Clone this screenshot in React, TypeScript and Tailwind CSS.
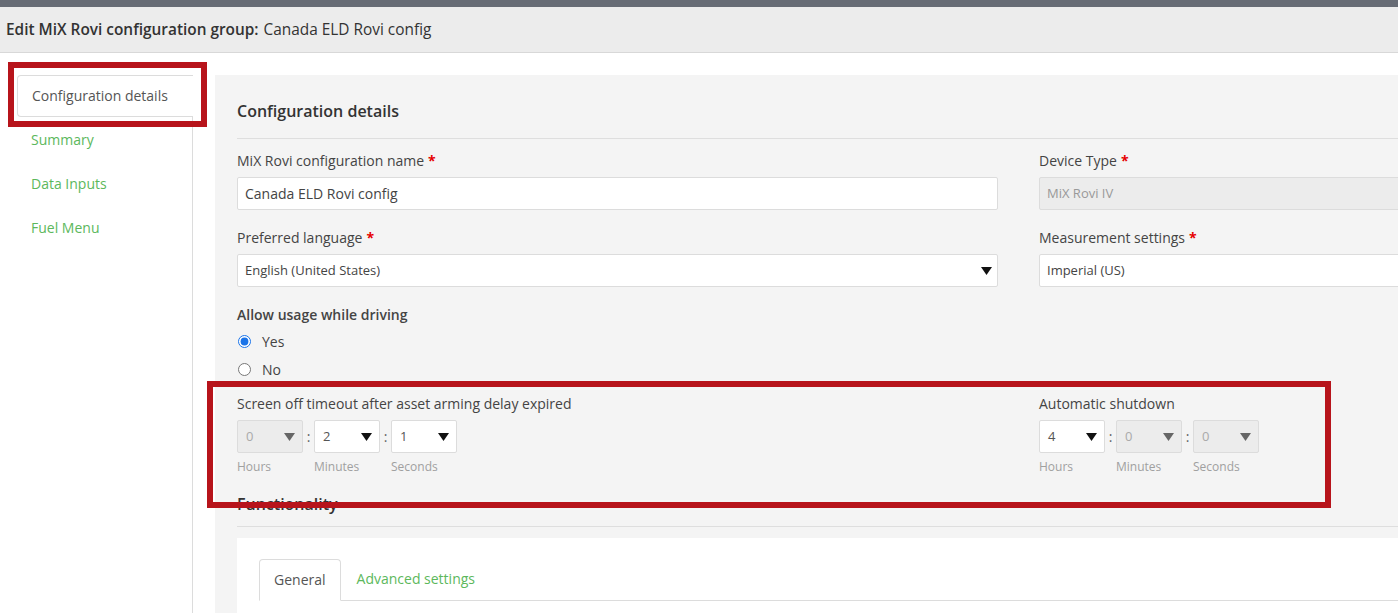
import { FunctionComponent } from "react";

const green = "text-[#5cb85c]";

const Caret: FunctionComponent<{ muted?: boolean }> = ({ muted }) => (
  <svg width="11" height="8" viewBox="0 0 11 8" className="shrink-0">
    <path d="M0 0h11L5.5 8z" fill={muted ? "#666" : "#111"} />
  </svg>
);

type TimeSelectProps = { value: string; unit: string; disabled?: boolean };

const TimeSelect: FunctionComponent<TimeSelectProps> = ({ value, unit, disabled }) => (
  <div className="flex flex-col">
    <div
      className={`flex h-[33px] w-[66px] items-center justify-between rounded-[2px] border border-[#dcdcdc] pl-[8px] pr-[7px] text-[13px] ${
        disabled ? "bg-[#ececec] text-[#aaa]" : "bg-white text-[#555]"
      }`}
    >
      <span>{value}</span>
      <Caret muted={disabled} />
    </div>
    <span className="mt-[6px] text-[12px] leading-[16px] text-[#a0a0a0]">{unit}</span>
  </div>
);

const Colon = () => (
  <span className="flex h-[33px] w-[11px] items-center justify-center text-[14px] text-[#666]">:</span>
);

const TimeGroup: FunctionComponent<{ title: string; values: [string, string, string]; enabled: boolean[] }> = ({
  title,
  values,
  enabled,
}) => (
  <div>
    <p className="h-[20px] text-[14px] leading-[20px] text-[#444]">{title}</p>
    <div className="mt-[6px] flex items-start">
      <TimeSelect value={values[0]} unit="Hours" disabled={!enabled[0]} />
      <Colon />
      <TimeSelect value={values[1]} unit="Minutes" disabled={!enabled[1]} />
      <Colon />
      <TimeSelect value={values[2]} unit="Seconds" disabled={!enabled[2]} />
    </div>
  </div>
);

const Label: FunctionComponent<{ text: string; required?: boolean }> = ({ text, required }) => (
  <p className="h-[20px] text-[14px] leading-[20px] text-[#444]">
    {text}
    {required && <span className="ml-[4px] font-bold text-[#e60000]">*</span>}
  </p>
);

const App = () => {
  return (
    <div
      className="relative h-[613px] w-full overflow-hidden bg-white text-[#333]"
      style={{ fontFamily: '"Open Sans", "Liberation Sans", sans-serif' }}
    >
      <div className="h-[7px] bg-[#676c75]" />
      <div className="flex h-[46px] items-center border-b border-[#d8d8d8] bg-[#ececec] pl-[6px] text-[15.4px] text-[#333]">
        <span className="font-semibold">Edit MiX Rovi configuration group:</span>
        <span className="ml-[5px]">Canada ELD Rovi config</span>
      </div>

      <div className="flex pt-[22px]">
        <nav className="flex w-[193px] shrink-0 flex-col pl-[17px]">
          <div className="flex h-[42px] items-center rounded-l-[4px] border border-r-0 border-[#dcdcdc] pb-[1px] pl-[14px] text-[14px] text-[#555]">
            Configuration details
          </div>
          <div className="flex h-[500px] flex-col border-r border-[#dcdcdc] pl-[14px] text-[14px]">
            <span className={`mt-[13px] h-[20px] leading-[20px] ${green}`}>Summary</span>
            <span className={`mt-[24px] h-[20px] leading-[20px] ${green}`}>Data Inputs</span>
            <span className={`mt-[24px] h-[20px] leading-[20px] ${green}`}>Fuel Menu</span>
          </div>
        </nav>

        <main className="ml-[22px] w-[1620px] shrink-0 bg-[#f4f4f4] px-[22px] pt-[25px]">
          <h2 className="h-[22px] text-[16px] leading-[22px] font-semibold text-[#333]">Configuration details</h2>
          <div className="mt-[16px] border-t border-[#dedede]" />

          <div className="mt-[12px] grid grid-cols-[761px_761px] gap-x-[41px]">
            <div>
              <Label text="MiX Rovi configuration name" required />
              <div className="mt-[6px] flex h-[33px] items-center rounded-[2px] border border-[#dcdcdc] bg-white pl-[7px] text-[14px] text-[#444]">
                Canada ELD Rovi config
              </div>
            </div>
            <div>
              <Label text="Device Type" required />
              <div className="mt-[6px] flex h-[33px] items-center rounded-[2px] border border-[#dcdcdc] bg-[#ececec] pl-[7px] text-[13px] text-[#999]">
                MiX Rovi IV
              </div>
            </div>

            <div className="mt-[18px]">
              <Label text="Preferred language" required />
              <div className="mt-[6px] flex h-[33px] items-center justify-between rounded-[2px] border border-[#dcdcdc] bg-white pl-[7px] pr-[5px] text-[13px] text-[#444]">
                <span>English (United States)</span>
                <Caret />
              </div>
            </div>
            <div className="mt-[18px]">
              <Label text="Measurement settings" required />
              <div className="mt-[6px] flex h-[33px] items-center rounded-[2px] border border-[#dcdcdc] bg-white pl-[7px] text-[13px] text-[#444]">
                Imperial (US)
              </div>
            </div>
          </div>

          <p className="mt-[18px] h-[20px] text-[14px] leading-[20px] font-semibold text-[#444]">Allow usage while driving</p>
          <label className="mt-[6px] flex h-[20px] items-center text-[14px] text-[#444]">
            <input type="radio" name="drive" defaultChecked className="m-0 ml-[1px] h-[13px] w-[13px] accent-[#1a73e8]" />
            <span className="ml-[11px]">Yes</span>
          </label>
          <label className="mt-[8px] flex h-[20px] items-center text-[14px] text-[#444]">
            <input type="radio" name="drive" className="m-0 ml-[1px] h-[13px] w-[13px]" />
            <span className="ml-[11px]">No</span>
          </label>

          <div className="mt-[15px] grid grid-cols-[761px_761px] gap-x-[41px]">
            <TimeGroup
              title="Screen off timeout after asset arming delay expired"
              values={["0", "2", "1"]}
              enabled={[false, true, true]}
            />
            <TimeGroup title="Automatic shutdown" values={["4", "0", "0"]} enabled={[true, false, false]} />
          </div>

          <h2 className="mt-[18px] h-[22px] text-[16px] leading-[22px] font-semibold text-[#333]">Functionality</h2>
          <div className="mt-[11px] border-t border-[#dedede]" />

          <div className="mt-[11px] h-[200px] bg-white px-[22px] pt-[21px]">
            <div className="flex items-end border-b border-[#dcdcdc]">
              <div className="-mb-px flex h-[42px] items-center rounded-t-[4px] border border-b-white border-[#dcdcdc] bg-white px-[14px] pb-[2px] text-[14px] text-[#555]">
                General
              </div>
              <div className={`flex h-[41px] items-center px-[16px] pb-[2px] text-[14px] ${green}`}>Advanced settings</div>
            </div>
          </div>
        </main>
      </div>

      {/* annotation boxes drawn over the screenshot */}
      <div className="pointer-events-none absolute left-[8px] top-[62px] h-[65px] w-[199px] border-[6px] border-[#b7141b]" />
      <div className="pointer-events-none absolute left-[207px] top-[381px] h-[127px] w-[1124px] border-[6px] border-[#b7141b]" />
    </div>
  );
};

export default App;
